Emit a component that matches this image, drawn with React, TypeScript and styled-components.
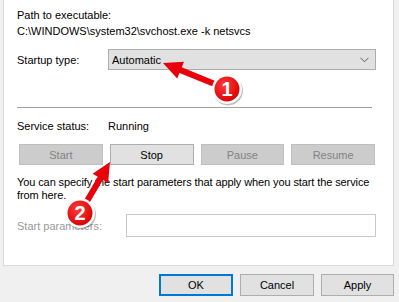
import React from 'react';
import styled, { createGlobalStyle } from 'styled-components';

const COLORS = {
  FACE: '#f0f0f0',
  WHITE: '#ffffff',
  BUTTON: '#e1e1e1',
  BUTTON_BORDER: '#adadad',
  DISABLED: '#cccccc',
  DISABLED_BORDER: '#bfbfbf',
  DISABLED_TEXT: '#838383',
  FOCUS: '#0078d7',
  RED: '#e8000b',
};

const GlobalStyle = createGlobalStyle`
  body {
    margin: 0;
    background: ${COLORS.FACE};
    font-family: 'Liberation Sans', Arial, sans-serif;
    font-size: 11px;
    color: #000;
  }
  * { box-sizing: border-box; }
`;

const Page = styled.div`
  position: relative;
  width: 399px;
  height: 302px;
  overflow: hidden;
  display: flex;
  flex-direction: column;
`;

const Panel = styled.div`
  margin-left: 3px;
  width: 391px;
  height: 266px;
  background: ${COLORS.WHITE};
  border: 1px solid #d9d9d9;
  border-top: none;
  padding: 7px 17px 0 13px;
`;

const Lines = styled.div`
  line-height: 16px;
  white-space: nowrap;
`;

const Row = styled.div<{ $top: number }>`
  display: flex;
  align-items: center;
  margin-top: ${p => p.$top}px;
  line-height: 16px;
`;

const Label = styled.span<{ $width: number; $muted?: boolean }>`
  flex: none;
  width: ${p => p.$width}px;
  color: ${p => (p.$muted ? '#9a9a9a' : '#000')};
`;

const Select = styled.div`
  flex: 1;
  height: 21px;
  display: flex;
  align-items: center;
  justify-content: space-between;
  padding: 0 6px 0 3px;
  background: ${COLORS.BUTTON};
  border: 1px solid ${COLORS.BUTTON_BORDER};
`;

const Separator = styled.div`
  margin-top: 37px;
  margin-right: 4px;
  height: 1px;
  background: #a0a0a0;
`;

const ButtonGrid = styled.div`
  display: grid;
  grid-template-columns: repeat(4, 1fr);
  gap: 7px;
  margin: 10px 1px 0 2px;
`;

const Button = styled.div<{ $disabled?: boolean; $focus?: boolean; $width?: number }>`
  height: ${p => (p.$width ? 22 : 21)}px;
  width: ${p => (p.$width ? `${p.$width}px` : 'auto')};
  display: flex;
  align-items: center;
  justify-content: center;
  background: ${p => (p.$disabled ? COLORS.DISABLED : COLORS.BUTTON)};
  border: ${p =>
    p.$focus
      ? `2px solid ${COLORS.FOCUS}`
      : `1px solid ${p.$disabled ? COLORS.DISABLED_BORDER : COLORS.BUTTON_BORDER}`};
  color: ${p => (p.$disabled ? COLORS.DISABLED_TEXT : '#000')};
`;

const Paragraph = styled.p`
  margin: 11px 0 0;
  line-height: 13px;
  white-space: nowrap;
  letter-spacing: -0.1px;
`;

const Input = styled.div`
  flex: 1;
  height: 23px;
  background: ${COLORS.WHITE};
  border: 1px solid #c8c8c8;
`;

const Footer = styled.div`
  display: flex;
  justify-content: flex-end;
  gap: 7px;
  margin-top: 8px;
  padding-right: 5px;
`;

const Overlay = styled.svg`
  position: absolute;
  left: 0;
  top: 0;
  pointer-events: none;
`;

const Chevron = () => (
  <svg width="9" height="6" viewBox="0 0 9 6">
    <path d="M0.5 0.8 L4.5 4.8 L8.5 0.8" fill="none" stroke="#5a5a5a" strokeWidth="1" />
  </svg>
);

type Pt = [number, number];

// arrow polygon from tail to tip, shaft + head
const arrowPoints = (tail: Pt, tip: Pt, shaft = 6, head = 19, half = 9) => {
  const dx = tip[0] - tail[0];
  const dy = tip[1] - tail[1];
  const len = Math.hypot(dx, dy);
  const ux = dx / len;
  const uy = dy / len;
  const nx = -uy;
  const ny = ux;
  const bx = tip[0] - ux * head;
  const by = tip[1] - uy * head;
  const pts: Pt[] = [
    [tail[0] + (nx * shaft) / 2, tail[1] + (ny * shaft) / 2],
    [bx + (nx * shaft) / 2, by + (ny * shaft) / 2],
    [bx + nx * half, by + ny * half],
    tip,
    [bx - nx * half, by - ny * half],
    [bx - (nx * shaft) / 2, by - (ny * shaft) / 2],
    [tail[0] - (nx * shaft) / 2, tail[1] - (ny * shaft) / 2],
  ];
  return pts.map(p => p.join(',')).join(' ');
};

const Badge = ({ x, y, n }: { x: number; y: number; n: number }) => (
  <g>
    <circle cx={x + 1} cy={y + 1.5} r={15} fill="rgba(0,0,0,0.25)" />
    <circle cx={x} cy={y} r={15} fill="#fff" />
    <circle cx={x} cy={y} r={12.5} fill="url(#badgeFill)" />
    <text
      x={x}
      y={y + 7}
      textAnchor="middle"
      fontFamily="'Liberation Sans', Arial, sans-serif"
      fontWeight="bold"
      fontSize="20"
      fill="#fff"
    >
      {n}
    </text>
  </g>
);

const Annotations = () => (
  <Overlay width={399} height={302} viewBox="0 0 399 302">
    <defs>
      <radialGradient id="badgeFill" cx="40%" cy="35%" r="70%">
        <stop offset="0%" stopColor="#ff3a3a" />
        <stop offset="100%" stopColor="#d80000" />
      </radialGradient>
    </defs>
    <polygon points={arrowPoints([227, 89], [163, 63])} fill={COLORS.RED} />
    <polygon points={arrowPoints([80, 213], [110, 162])} fill={COLORS.RED} />
    <Badge x={227} y={89} n={1} />
    <Badge x={80} y={213} n={2} />
  </Overlay>
);

export default function App() {
  return (
    <Page>
      <GlobalStyle />
      <Panel>
        <Lines>
          Path to executable:
          <br />
          C:\WINDOWS\system32\svchost.exe -k netsvcs
        </Lines>
        <Row $top={10}>
          <Label $width={91}>Startup type:</Label>
          <Select>
            <span>Automatic</span>
            <Chevron />
          </Select>
        </Row>
        <Separator />
        <Row $top={10}>
          <Label $width={91}>Service status:</Label>
          <span>Running</span>
        </Row>
        <ButtonGrid>
          <Button $disabled>Start</Button>
          <Button>Stop</Button>
          <Button $disabled>Pause</Button>
          <Button $disabled>Resume</Button>
        </ButtonGrid>
        <Paragraph>
          You can specify the start parameters that apply when you start the service
          <br />
          from here.
        </Paragraph>
        <Row $top={12}>
          <Label $width={109} $muted>
            Start parameters:
          </Label>
          <Input />
        </Row>
      </Panel>
      <Footer>
        <Button $focus $width={74}>OK</Button>
        <Button $width={74}>Cancel</Button>
        <Button $width={73}>Apply</Button>
      </Footer>
      <Annotations />
    </Page>
  );
}
